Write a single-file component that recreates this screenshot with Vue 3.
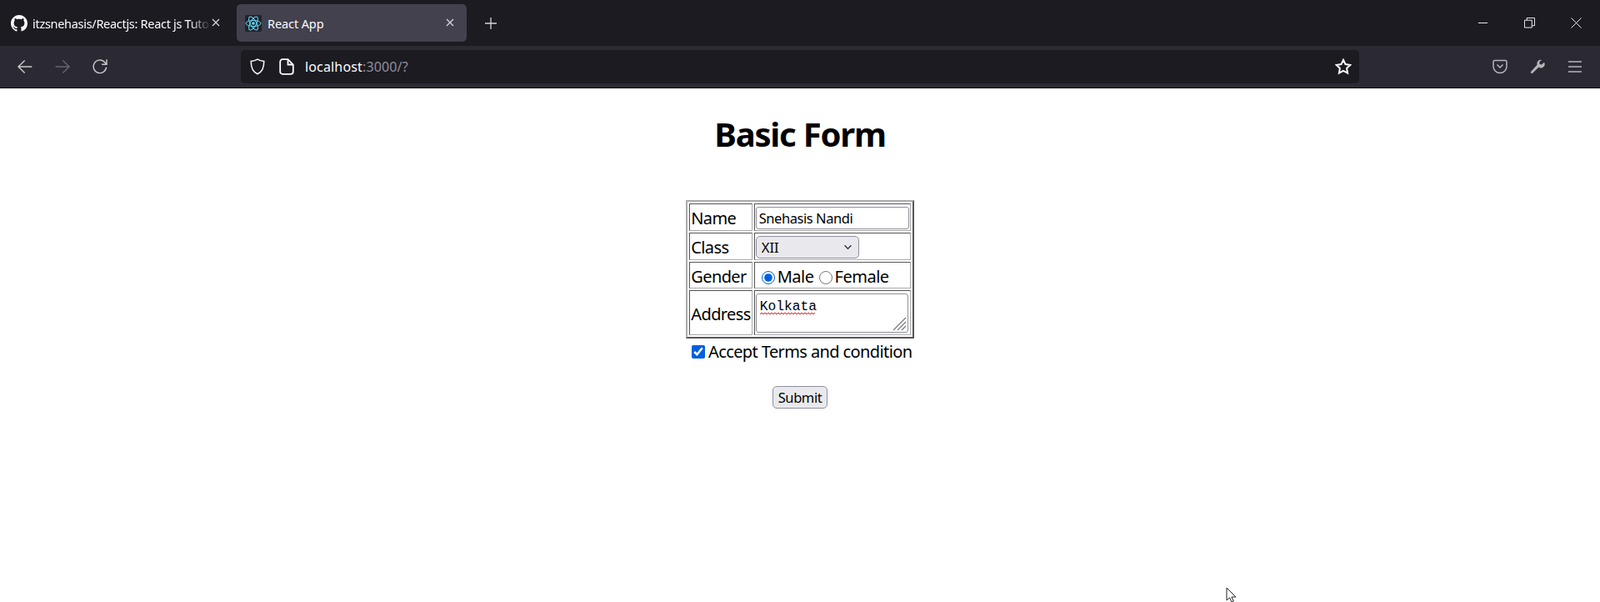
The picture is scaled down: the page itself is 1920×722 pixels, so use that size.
<script setup>
import { ref } from 'vue'
const name = ref('Snehasis Nandi')
const cls = ref('XII')
const gender = ref('Male')
const address = ref('Kolkata')
const accept = ref(true)
</script>

<template>
  <div class="window">
    <header class="tabbar">
      <div class="tab">
        <svg class="favicon" viewBox="0 0 16 16" fill="#fbfbfe"><path d="M8 0C3.58 0 0 3.58 0 8c0 3.54 2.29 6.53 5.47 7.59.4.07.55-.17.55-.38 0-.19-.01-.82-.01-1.49-2.01.37-2.53-.49-2.69-.94-.09-.23-.48-.94-.82-1.13-.28-.15-.68-.52-.01-.53.63-.01 1.08.58 1.23.82.72 1.21 1.87.87 2.33.66.07-.52.28-.87.51-1.07-1.78-.2-3.64-.89-3.64-3.95 0-.87.31-1.59.82-2.15-.08-.2-.36-1.02.08-2.12 0 0 .67-.21 2.2.82.64-.18 1.32-.27 2-.27s1.36.09 2 .27c1.53-1.04 2.2-.82 2.2-.82.44 1.1.16 1.92.08 2.12.51.56.82 1.27.82 2.15 0 3.07-1.87 3.75-3.65 3.95.29.25.54.73.54 1.48 0 1.07-.01 1.93-.01 2.2 0 .21.15.46.55.38A8.01 8.01 0 0 0 16 8c0-4.42-3.58-8-8-8z"/></svg>
        <span class="tab-title fade">itzsnehasis/Reactjs: React js Tutorial</span>
        <svg class="tab-x" viewBox="0 0 12 12"><path d="M2 2l8 8M10 2l-8 8"/></svg>
      </div>
      <div class="tab active">
        <svg class="favicon" viewBox="0 0 20 20">
          <rect width="20" height="20" rx="2" fill="#20232a"/>
          <g fill="none" stroke="#61dafb" stroke-width="1">
            <ellipse cx="10" cy="10" rx="9" ry="3.6"/>
            <ellipse cx="10" cy="10" rx="9" ry="3.6" transform="rotate(60 10 10)"/>
            <ellipse cx="10" cy="10" rx="9" ry="3.6" transform="rotate(120 10 10)"/>
          </g>
          <circle cx="10" cy="10" r="1.8" fill="#61dafb"/>
        </svg>
        <span class="tab-title">React App</span>
        <svg class="tab-x" viewBox="0 0 12 12"><path d="M2 2l8 8M10 2l-8 8"/></svg>
      </div>
      <svg class="plus" viewBox="0 0 16 16"><path d="M8 1v14M1 8h14"/></svg>
      <div class="win-controls">
        <svg viewBox="0 0 14 14"><path d="M1 7h12"/></svg>
        <svg viewBox="0 0 14 14"><path d="M.5 3.5h9.5v9.500h-9.500zM3.500 3.500v-3h10v10h-3.500"/></svg>
        <svg viewBox="0 0 14 14"><path d="M.5.5l13 13M13.500.5l-13 13"/></svg>
      </div>
    </header>

    <nav class="toolbar">
      <div class="nav-buttons">
        <svg viewBox="0 0 18 18" class="ico"><path d="M16.500 9H1.800M8.700 2.200L1.800 9l6.900 6.800"/></svg>
        <svg viewBox="0 0 18 18" class="ico dim"><path d="M1.500 9h14.700M9.300 2.200L16.200 9l-6.900 6.800"/></svg>
        <svg viewBox="0 0 18 18" class="ico"><path d="M15.800 9.500A7 7 0 1 1 13.600 3.700L16 6.300M16.200 1.200v5.300h-5.300"/></svg>
      </div>
      <div class="urlbar">
        <svg class="shield" viewBox="0 0 18 20"><path d="M9 1.200c2.500 1.500 4.800 2 7.800 2.300 0 7.500-1.800 12.700-7.800 15.300C3 16.200 1.200 11 1.200 3.500 4.200 3.200 6.500 2.700 9 1.200z"/></svg>
        <svg class="page" viewBox="0 0 18 20"><path d="M4 1.200h6.500L16.800 7.500V16A2.800 2.800 0 0 1 14 18.800H4A2.800 2.800 0 0 1 1.200 16V4A2.800 2.800 0 0 1 4 1.200zM10.500 1.200V7.500h6.300"/></svg>
        <span class="url">localhost<span class="url-dim">:3000/?</span></span>
        <svg class="star" viewBox="0 0 20 20"><path d="M10 1.800l2.500 5.300 5.800.8-4.200 4 1 5.800-5.100-2.800-5.100 2.800 1-5.800-4.200-4 5.800-.8z"/></svg>
      </div>
      <div class="tools">
        <svg viewBox="0 0 18 18" class="tool"><path d="M2.500 1.500h13A1.500 1.500 0 0 1 17 3v5.500a8 8 0 0 1-16 0V3a1.500 1.500 0 0 1 1.500-1.500zM5.500 6.500L9 10l3.500-3.500"/></svg>
        <svg viewBox="0 0 20 20" class="tool"><path class="wrench" d="M18.800 4.200l-3.200 3-2.600-.6-.6-2.600 3.100-3a4.800 4.800 0 0 0-5.800 6.300L1.500 16.500a1.400 1.400 0 0 0 2 2l8.200-8a4.800 4.800 0 0 0 7.100-6.300z"/></svg>
        <svg viewBox="0 0 18 16" class="tool"><path d="M1 2h16M1 8h16M1 14h16"/></svg>
      </div>
    </nav>

    <main class="page-body">
      <h1>Basic Form</h1>
      <form @submit.prevent>
        <table class="form-table">
          <tbody>
            <tr class="r1">
              <td class="label">Name</td>
              <td class="field"><input v-model="name" class="text" type="text" spellcheck="false" /></td>
            </tr>
            <tr class="r2">
              <td class="label">Class</td>
              <td class="field">
                <span class="select-wrap">
                  <select v-model="cls" class="select">
                    <option>X</option>
                    <option>XI</option>
                    <option>XII</option>
                  </select>
                  <svg class="chevron" viewBox="0 0 12 8"><path d="M1.500 1.500L6 6l4.500-4.500"/></svg>
                </span>
              </td>
            </tr>
            <tr class="r3">
              <td class="label">Gender</td>
              <td class="field gender">
                <input v-model="gender" class="radio" type="radio" value="Male" name="g" /><span>Male</span>
                <input v-model="gender" class="radio second" type="radio" value="Female" name="g" /><span>Female</span>
              </td>
            </tr>
            <tr class="r4">
              <td class="label">Address</td>
              <td class="field">
                <span class="area-wrap">
                  <textarea v-model="address" class="area" spellcheck="false"></textarea>
                  <svg class="squiggle" viewBox="0 0 68 4"><path d="M0 3l2-2 2 2 2-2 2 2 2-2 2 2 2-2 2 2 2-2 2 2 2-2 2 2 2-2 2 2 2-2 2 2 2-2 2 2 2-2 2 2 2-2 2 2 2-2 2 2 2-2 2 2 2-2 2 2 2-2 2 2 2-2 2 2 2-2"/></svg>
                  <svg class="grip" viewBox="0 0 18 18"><path d="M17 2L2 17M17 7L7 17M17 12L12 17"/></svg>
                </span>
              </td>
            </tr>
          </tbody>
        </table>
        <div class="terms">
          <input v-model="accept" class="check" type="checkbox" /><span>Accept Terms and condition</span>
        </div>
        <button class="submit" type="submit">Submit</button>
      </form>
      <svg class="cursor" viewBox="0 0 14 20"><path d="M1 1v15l3.500-3.200L7 18l2.300-1-2.400-5H12z"/></svg>
    </main>
  </div>
</template>

<style>
html, body { margin: 0; background: #fff; }
</style>

<style scoped>
.window {
  width: 1920px;
  height: 722px;
  display: flex;
  flex-direction: column;
  overflow: hidden;
  font-family: "Noto Sans", "Open Sans", sans-serif;
}
.tabbar {
  height: 55px;
  background: #1c1b22;
  display: flex;
  align-items: flex-start;
  padding-top: 5px;
  box-sizing: border-box;
  color: #fbfbfe;
}
.tab {
  width: 276px;
  height: 45px;
  box-sizing: border-box;
  padding: 0 14px 0 13px;
  display: flex;
  align-items: center;
  border-radius: 5px;
  font-size: 14.500px;
  letter-spacing: -0.3px;
}
.tab:first-child { width: 274px; margin-left: 0; padding-right: 9px; }
.tab.active {
  background: #42414d;
  margin-left: 10px;
  padding: 0 14px 0 10px;
  letter-spacing: -0.1px;
}
.favicon { width: 20px; height: 20px; flex: none; margin-right: 6px; }
.tab.active .favicon { margin-right: 7px; }
.tab-title { flex: 1; white-space: nowrap; overflow: hidden; }
.fade { -webkit-mask-image: linear-gradient(90deg, #000 88%, transparent 100%); mask-image: linear-gradient(90deg, #000 88%, transparent 100%); }
.tab-x { width: 12px; height: 12px; flex: none; fill: none; stroke: #d6d6da; stroke-width: 1.300; margin-top: -1px; }
.plus { width: 16px; height: 16px; margin: 15px 0 0 21px; fill: none; stroke: #d6d6da; stroke-width: 1.300; }
.win-controls {
  margin-left: auto;
  display: flex;
  gap: 43px;
  padding: 16px 22px 0 0;
}
.win-controls svg { width: 13px; height: 13px; fill: none; stroke: #fbfbfe; stroke-width: 1; }
.toolbar {
  height: 51px;
  box-sizing: border-box;
  background: #2b2a33;
  border-bottom: 1px solid #0c0c0d;
  display: flex;
  align-items: center;
  flex: none;
}
.nav-buttons { width: 289px; flex: none; display: flex; gap: 25px; padding-left: 20px; box-sizing: border-box; }
.ico { width: 20px; height: 20px; fill: none; stroke: #c8c8cc; stroke-width: 1.300; }
.ico.dim { stroke: #66656e; }
.urlbar {
  width: 1342px;
  height: 40px;
  background: #1c1b22;
  border-radius: 5px;
  display: flex;
  align-items: center;
  padding: 0 9px 0 11px;
  box-sizing: border-box;
  color: #fbfbfe;
}
.shield { width: 18px; height: 20px; fill: none; stroke: #fbfbfe; stroke-width: 1.500; }
.page { width: 18px; height: 20px; margin-left: 17px; fill: none; stroke: #fbfbfe; stroke-width: 1.800; }
.url { margin-left: 13px; font-size: 16px; letter-spacing: 0.15px; }
.url-dim { color: #8f8f9d; }
.star { width: 20px; height: 20px; margin-left: auto; fill: none; stroke: #fbfbfe; stroke-width: 2; }
.tools { flex: 1; display: flex; align-items: center; gap: 27px; justify-content: flex-end; padding-right: 21px; }
.tool { width: 18px; height: 18px; fill: none; stroke: #b5b5ba; stroke-width: 1.500; }
.tool .wrench { fill: #b5b5ba; stroke: none; }
.page-body {
  position: relative;
  flex: 1;
  text-align: center;
  color: #000;
  font-size: 20px;
}
h1 {
  margin: 28px 0 0;
  font-size: 40px;
  line-height: 53px;
  font-weight: 700;
  letter-spacing: -1.2px;
}
form { margin-top: 53px; display: flex; flex-direction: column; align-items: center; }
.form-table {
  border-collapse: separate;
  border-spacing: 2px;
  border: 2px solid;
  border-color: #aaa #555 #555 #aaa;
  width: 272px;
  box-sizing: border-box;
}
td { border: 1px solid; border-color: #555 #aaa #aaa #555; padding: 0 1px; box-sizing: border-box; line-height: 27px; white-space: nowrap; }
.label { width: 76px; text-align: left; letter-spacing: -0.6px; padding-top: 2px; }
.field { text-align: left; }
.r1 td, .r2 td { height: 33px; }
.r1 .field, .r2 .field { padding-top: 2px; }
.r3 td { height: 32px; }
.r4 td { height: 54px; }
.text {
  display: block;
  width: 184px;
  height: 27px;
  box-sizing: border-box;
  border: 1px solid #8f8f9d;
  border-radius: 3px;
  margin: 0;
  padding: 0 3px;
  font: 16.500px "Noto Sans", sans-serif;
  letter-spacing: -0.45px;
  outline: none;
}
.select-wrap { position: relative; display: block; width: 124px; height: 27px; }
.select {
  appearance: none;
  display: block;
  width: 124px;
  height: 27px;
  box-sizing: border-box;
  background: #e9e9ed;
  border: 1px solid #8f8f9d;
  border-radius: 5px;
  padding: 0 6px;
  font: 16.500px "Noto Sans", sans-serif;
  color: #000;
}
.chevron { position: absolute; right: 8px; top: 10px; width: 11px; height: 7px; fill: none; stroke: #333; stroke-width: 1.500; pointer-events: none; }
.gender { display: table-cell; padding-left: 6px; padding-top: 2px; letter-spacing: -0.5px; }
.radio { width: 16px; height: 16px; margin: 0 3px 0 2px; vertical-align: -2px; accent-color: #0060df; }
.radio.second { margin-left: 6px; }
.area-wrap { position: relative; display: block; width: 183px; height: 47px; }
.area {
  display: block;
  width: 183px;
  height: 47px;
  box-sizing: border-box;
  border: 1px solid #8f8f9d;
  border-radius: 3px;
  padding: 5px 4px;
  font: 16.250px/19px "Liberation Mono", monospace;
  resize: none;
  outline: none;
  overflow: hidden;
}
.squiggle { position: absolute; left: 5px; top: 22px; width: 68px; height: 4px; fill: none; stroke: #e51b1b; stroke-width: 1; pointer-events: none; }
.grip { position: absolute; right: 2px; bottom: 2px; width: 18px; height: 18px; fill: none; stroke: #777; stroke-width: 1.200; pointer-events: none; }
.terms { display: flex; align-items: center; height: 27px; width: 270px; white-space: nowrap; letter-spacing: -0.6px; margin-top: 2px; }
.check { width: 16px; height: 16px; margin: 0 4px 0 5px; accent-color: #0060df; flex: none; }
.submit {
  margin-top: 28px;
  width: 66px;
  height: 27px;
  box-sizing: border-box;
  padding: 0;
  background: #e9e9ed;
  border: 1px solid #8f8f9d;
  border-radius: 5px;
  color: #000;
  font: 16.500px "Noto Sans", sans-serif;
  letter-spacing: -0.4px;
}
.cursor { position: absolute; left: 1471px; top: 598px; width: 14px; height: 20px; fill: #fff; stroke: #222; stroke-width: 1; }
</style>
